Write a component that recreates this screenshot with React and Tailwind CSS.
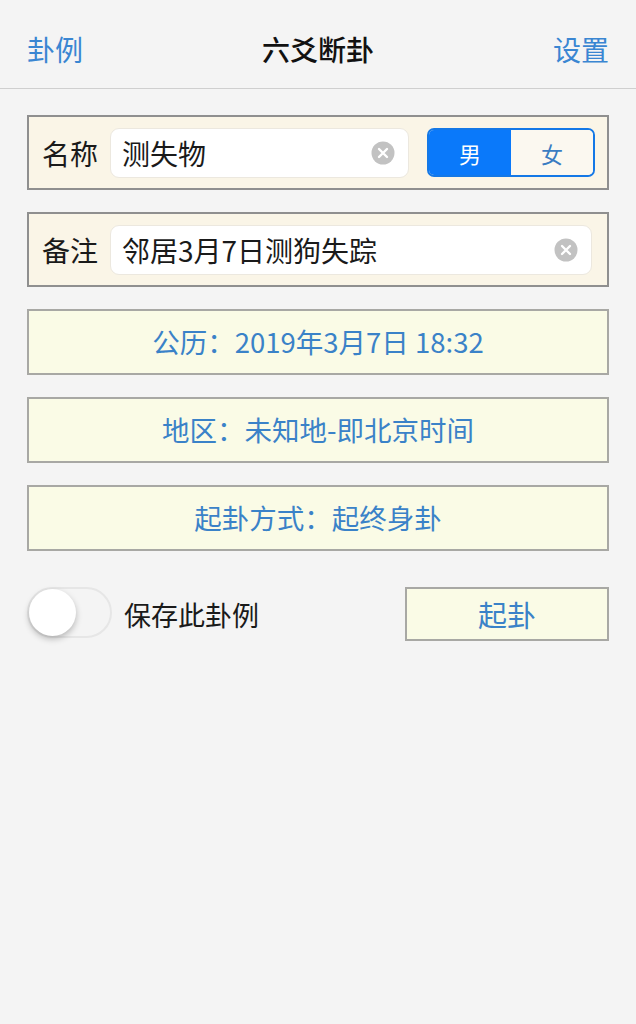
import React, { useState } from 'react';

const font = { fontFamily: '"Noto Sans CJK SC", "Noto Sans", sans-serif' };

const ClearIcon = () => (
  <svg width="24" height="24" viewBox="0 0 24 24" className="shrink-0">
    <circle cx="12" cy="12" r="11.5" fill="#c2c2c2" />
    <path d="M8 8 L16 16 M16 8 L8 16" stroke="#ffffff" strokeWidth="2.4" strokeLinecap="round" />
  </svg>
);

const TextField = ({ label, value, pr, children }) => (
  <div className={`flex items-center h-[75px] border-2 border-[#8f8f8f] bg-[#faf5e7] pl-[13px] ${pr}`}>
    <span className="text-[28px] text-[#1a1a1a] leading-none mr-[12px]">{label}</span>
    <div className="flex-1 flex items-center h-[50px] bg-white rounded-[9px] border border-[#ece8df] pl-[11px] pr-[13px]">
      <span className="flex-1 text-[28px] text-[#1a1a1a] leading-none">{value}</span>
      <ClearIcon />
    </div>
    {children}
  </div>
);

const InfoRow = ({ children }) => (
  <div className="flex items-center justify-center h-[66px] border-2 border-[#a8a8a4] bg-[#fafbe6] text-[27.5px] text-[#3a82c8] leading-none">
    {children}
  </div>
);

export default function App() {
  const [gender, setGender] = useState('male');
  const [save, setSave] = useState(false);

  return (
    <div className="min-h-[1024px] bg-[#f4f4f4]" style={font}>
      <div className="flex items-center justify-between h-[89px] px-[27px] border-b border-[#cfcfcf] pt-[10px]">
        <span className="text-[28px] text-[#3a86d2] leading-none">卦例</span>
        <span className="text-[28px] font-medium text-[#111] leading-none">六爻断卦</span>
        <span className="text-[28px] text-[#3a86d2] leading-none">设置</span>
      </div>

      <div className="flex flex-col gap-[22px] px-[27px] pt-[26px]">
        <TextField label="名称" value="测失物" pr="pr-[12px]">
          <div className="flex ml-[18px] w-[168px] h-[49px] rounded-[7px] border-2 border-[#1478e6] overflow-hidden text-[22px] leading-none">
            <button
              onClick={() => setGender('male')}
              className={`flex-1 flex items-center justify-center ${gender === 'male' ? 'bg-[#0a79fa] text-white' : 'bg-[#fbf8f0] text-[#1478e6]'}`}
            >
              男
            </button>
            <button
              onClick={() => setGender('female')}
              className={`flex-1 flex items-center justify-center ${gender === 'female' ? 'bg-[#0a79fa] text-white' : 'bg-[#fbf8f0] text-[#3a7cc2]'}`}
            >
              女
            </button>
          </div>
        </TextField>

        <TextField label="备注" value="邻居3月7日测狗失踪" pr="pr-[15px]" />

        <InfoRow>公历：2019年3月7日 18:32</InfoRow>
        <InfoRow>地区：未知地-即北京时间</InfoRow>
        <InfoRow>起卦方式：起终身卦</InfoRow>

        <div className="flex items-center justify-between mt-[14px]">
          <div className="flex items-center">
            <button
              onClick={() => setSave(!save)}
              className={`relative w-[85px] h-[51px] rounded-full border-2 -mt-[4px] ${save ? 'bg-[#4cd964] border-[#4cd964]' : 'bg-[#f4f4f4] border-[#e6e6e6]'}`}
            >
              <span
                className={`absolute top-[0px] w-[47px] h-[47px] rounded-full bg-white shadow-[0_3px_6px_rgba(0,0,0,0.25)] ${save ? 'left-[34px]' : 'left-[0px]'}`}
              />
            </button>
            <span className="ml-[12px] text-[27px] text-[#1a1a1a] leading-none">保存此卦例</span>
          </div>
          <button className="flex items-center justify-center w-[204px] h-[54px] border-2 border-[#a8a8a4] bg-[#fafbe6] text-[29px] text-[#3a82c8] leading-none">
            起卦
          </button>
        </div>
      </div>
    </div>
  );
}
